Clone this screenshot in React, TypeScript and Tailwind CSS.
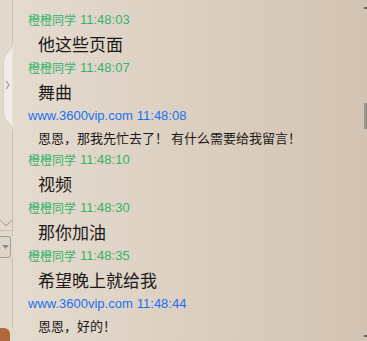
const latin = "font-['Liberation_Sans','Noto_Sans_CJK_SC',sans-serif]";

type Msg = { who: "me" | "site"; time: string; text: string; big: boolean };

const messages: Msg[] = [
  { who: "me", time: "11:48:03", text: "他这些页面", big: true },
  { who: "me", time: "11:48:07", text: "舞曲", big: true },
  { who: "site", time: "11:48:08", text: "恩恩，那我先忙去了！ 有什么需要给我留言！", big: false },
  { who: "me", time: "11:48:10", text: "视频", big: true },
  { who: "me", time: "11:48:30", text: "那你加油", big: true },
  { who: "me", time: "11:48:35", text: "希望晚上就给我", big: true },
  { who: "site", time: "11:48:44", text: "恩恩，好的！", big: false },
];

function Sidebar() {
  return (
    <div className="flex w-[13px] shrink-0 flex-col bg-[#e2d9cd]">
      <div className="h-[43px] border-r border-[#c9beb1]" />
      <svg width="13" height="87" viewBox="0 0 13 87" className="block">
        <path d="M12.5 0 C12.5 8 3.5 10 3.5 18 L3.5 70 C3.5 78 12.5 80 12.5 87 Z" fill="#f0ebe5" />
        <path d="M12.5 0 C12.5 8 3.5 10 3.5 18 L3.5 70 C3.5 78 12.5 80 12.5 87" fill="none" stroke="#d8cfc4" />
        <path d="M6 38 L9 42 L6 46" fill="none" stroke="#9a948d" strokeWidth="1.2" />
      </svg>
      <div className="h-[86px] border-r border-[#c9beb1]" />
      <div className="h-[14px] border-r border-[#c9beb1]">
        <svg width="12" height="14" viewBox="0 0 12 14" className="block">
          <path d="M0.5 4 L6 10 L11.5 4" fill="none" stroke="#9a948d" strokeWidth="1" />
        </svg>
      </div>
      <div className="h-[6px] border-r border-t border-[#c9beb1]" />
      <div className="flex h-[22px] w-[11px] items-center justify-center rounded-r-[3px] border border-l-0 border-[#a39d96] bg-[#ddd5ca]">
        <svg width="7" height="5" viewBox="0 0 7 5">
          <path d="M0 0 L7 0 L3.5 4 Z" fill="#8e8983" />
        </svg>
      </div>
      <div className="flex-1 border-r border-[#c9beb1]" />
      <div className="h-[13px] w-[10px] rounded-tr-[6px] bg-[#b0683a]" />
    </div>
  );
}

export default function App() {
  return (
    <div className="flex h-[341px] w-[367px] overflow-hidden">
      <Sidebar />
      <div className="relative flex-1 bg-gradient-to-r from-[#e4dbcf] to-[#d3c3b2] pt-2">
        {messages.map((m, i) => (
          <div key={i}>
            <div
              className={`flex h-[24px] items-center pl-[15px] text-[13px] ${latin} ${
                m.who === "me" ? "text-[#34b36b]" : "text-[#1a70f2]"
              }`}
            >
              {m.who === "me" ? (
                <span className="font-['Noto_Sans_CJK_SC',sans-serif] text-[12px]">橙橙同学</span>
              ) : (
                <span>www.3600vip.com</span>
              )}
              <span className="ml-[4px]">{m.time}</span>
            </div>
            <div
              className={`flex items-center pl-[25px] font-['Noto_Sans_CJK_SC',sans-serif] text-[#1c1a18] ${
                m.big ? "h-[24px] text-[17px]" : "h-[20px] text-[13px]"
              }`}
            >
              {m.text}
            </div>
          </div>
        ))}
        <div className="absolute right-0 top-[7px] h-[2px] w-[3px] bg-[#6e655b]" />
        <div className="absolute right-0 top-[103px] h-[26px] w-[3px] bg-gradient-to-r from-[#a89e92] to-[#8c8378]" />
        <div className="absolute right-0 top-[335px] h-[2px] w-[3px] bg-[#6e655b]" />
      </div>
    </div>
  );
}
